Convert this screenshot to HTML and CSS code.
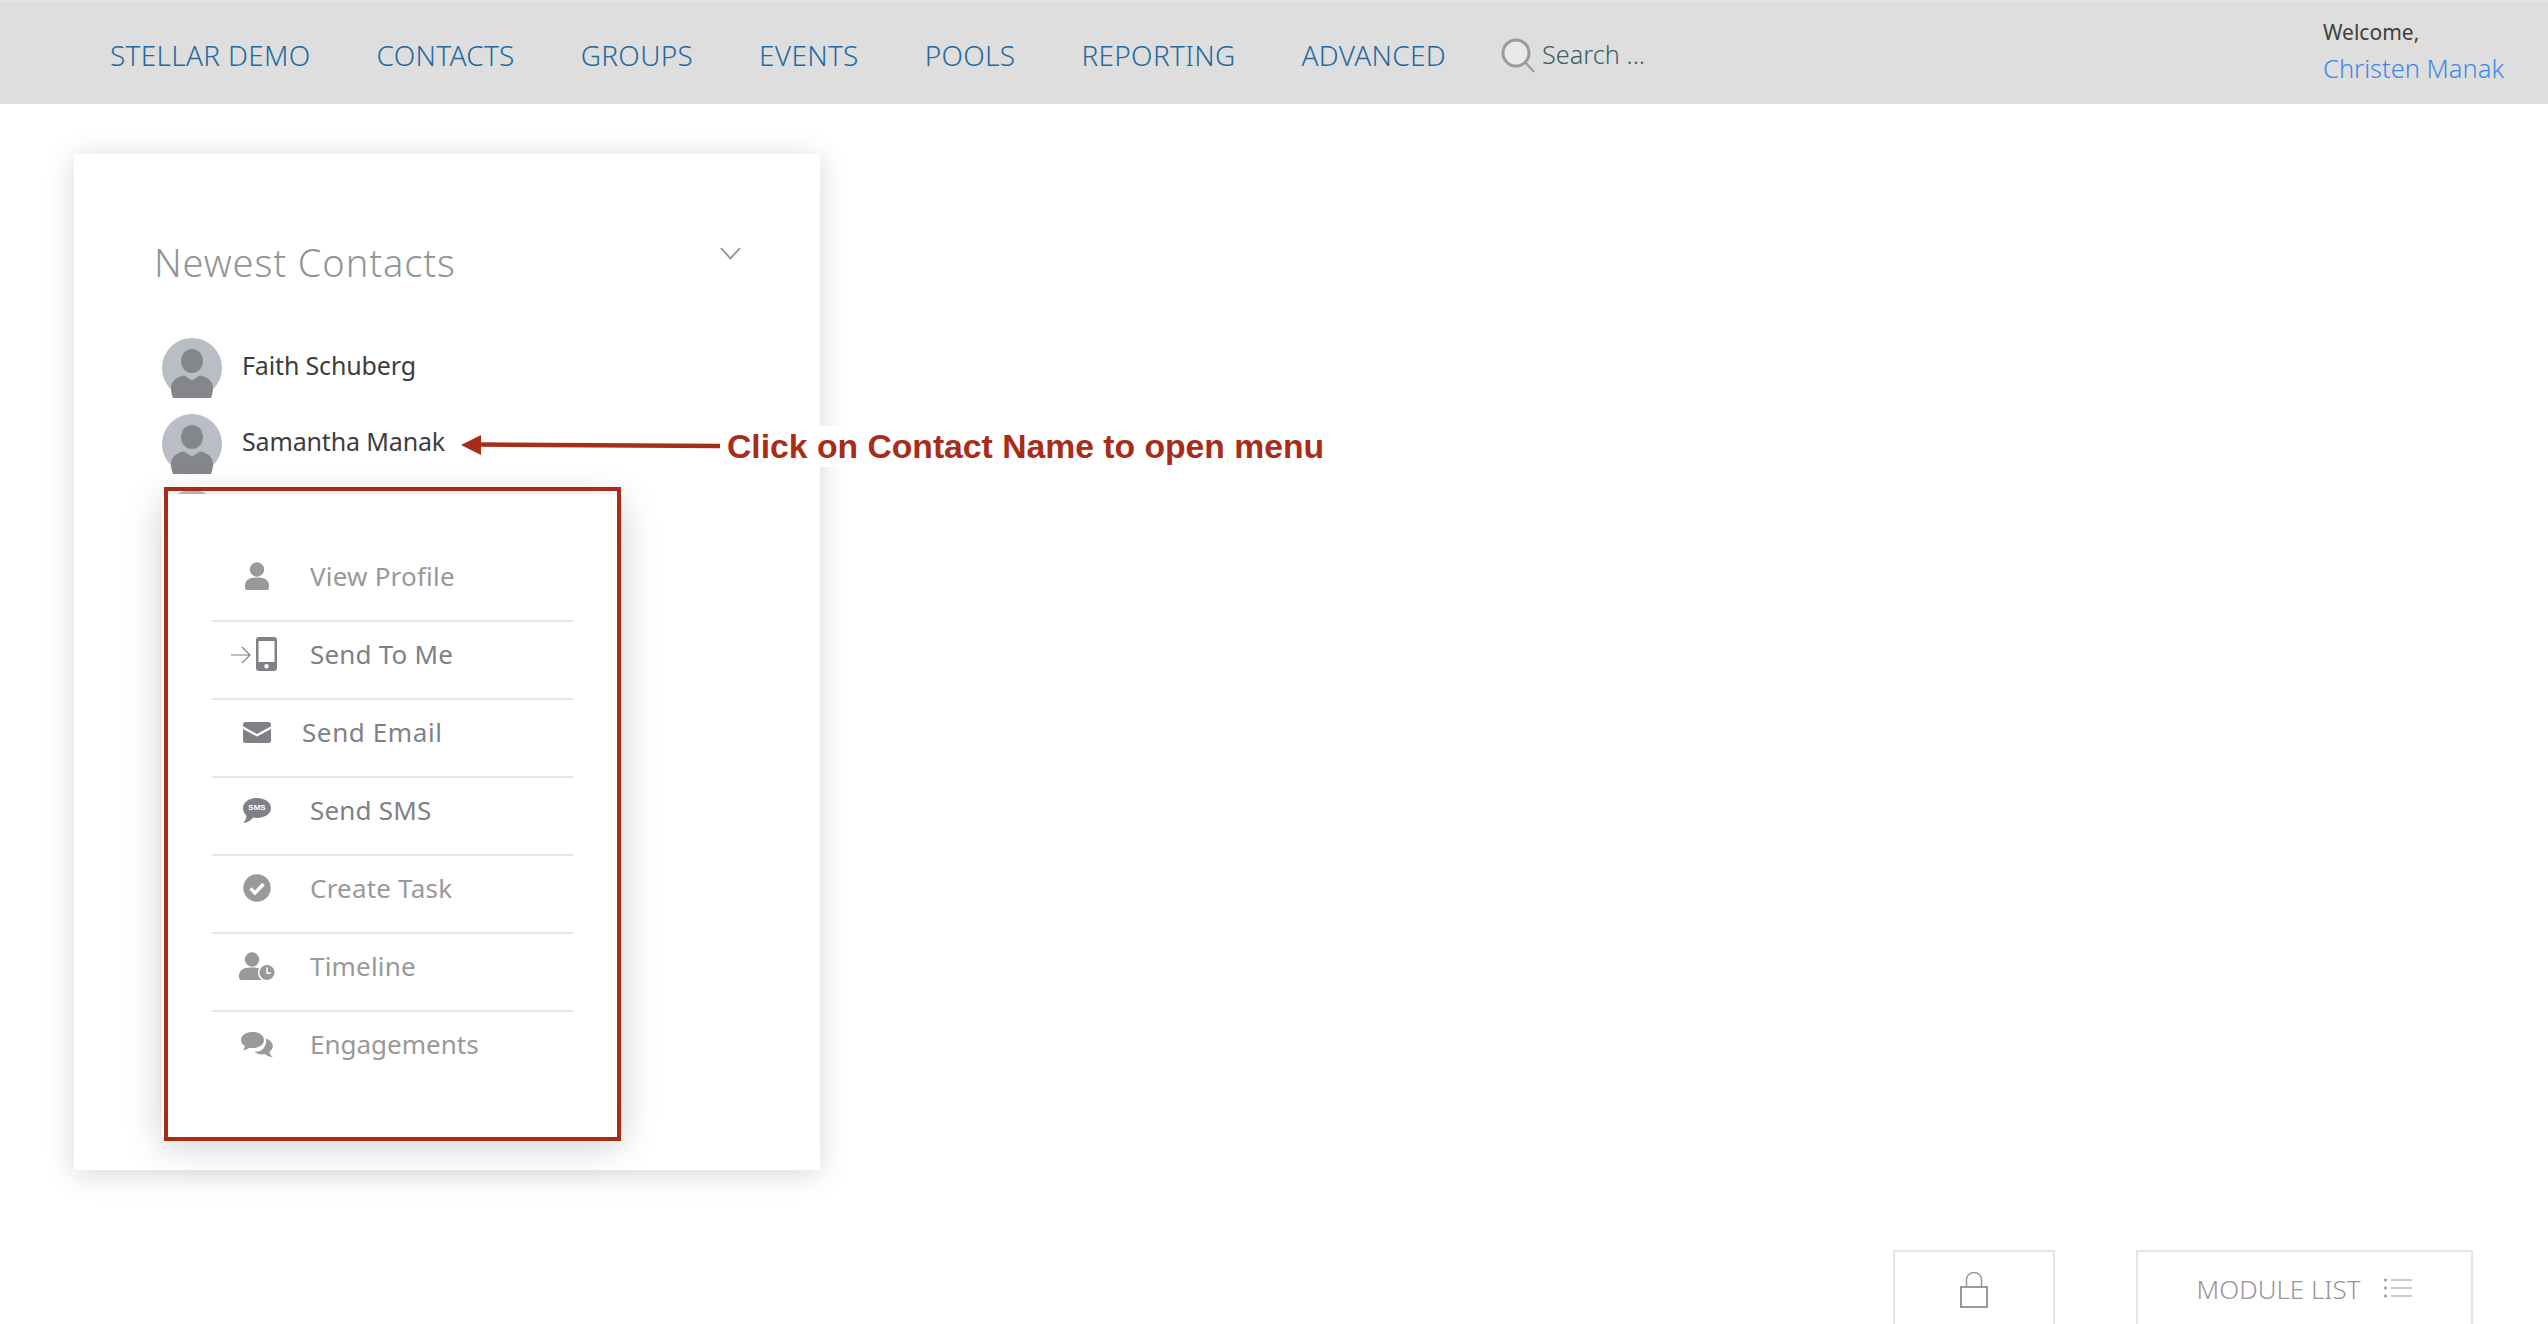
FILE: index.html
```html
<!DOCTYPE html>
<html lang="en">
<head>
<meta charset="utf-8">
<title>Newest Contacts</title>
<link rel="stylesheet" href="styles.css">
</head>
<body>
<div class="page">
  <header class="topbar">
    <nav class="nav">
      <a class="nav-link">STELLAR DEMO</a>
      <a class="nav-link">CONTACTS</a>
      <a class="nav-link">GROUPS</a>
      <a class="nav-link">EVENTS</a>
      <a class="nav-link">POOLS</a>
      <a class="nav-link">REPORTING</a>
      <a class="nav-link">ADVANCED</a>
    </nav>
    <div class="search">
      <svg class="search-icon" width="36" height="36" viewBox="0 0 36 36"><circle cx="16" cy="15" r="13" fill="#e9e9e9" stroke="#9a9a9a" stroke-width="3"/><path d="M25 24l9 10" stroke="#9a9a9a" stroke-width="2" fill="none"/></svg>
      <span class="search-text">Search ...</span>
    </div>
    <div class="user">
      <div class="welcome">Welcome,</div>
      <div class="user-name">Christen Manak</div>
    </div>
  </header>

  <main class="main">
    <section class="card">
      <div class="card-head">
        <h2 class="card-title">Newest Contacts</h2>
        <svg class="chevron" width="21" height="13" viewBox="0 0 21 13"><path d="M1 1l9.500 10.500L20 1" fill="none" stroke="#8f8f8f" stroke-width="1.800"/></svg>
      </div>
      <ul class="contacts">
        <li class="contact">
          <svg class="avatar" width="60" height="60" viewBox="0 0 60 60"><use href="#avatar"/></svg>
          <span class="contact-name">Faith Schuberg</span>
        </li>
        <li class="contact">
          <svg class="avatar" width="60" height="60" viewBox="0 0 60 60"><use href="#avatar"/></svg>
          <span class="contact-name">Samantha Manak</span>
        </li>
        <li class="contact">
          <svg class="avatar" width="60" height="60" viewBox="0 0 60 60"><use href="#avatar"/></svg>
        </li>
      </ul>

      <div class="popup">
        <ul class="menu">
          <li class="menu-row light">
            <span class="menu-icon"><svg width="24" height="28" viewBox="0 0 24 28"><circle cx="12" cy="7.500" r="7.200" fill="#999"/><path d="M0 24c0-6 4-8.500 12-8.500S24 18 24 24v1.500A2.500 2.500 0 0 1 21.500 28h-19A2.500 2.500 0 0 1 0 25.500z" fill="#999"/></svg></span>
            <span class="menu-label">View Profile</span>
          </li>
          <li class="menu-row">
            <span class="menu-icon"><svg class="icon-send" width="46" height="34" viewBox="0 0 46 34"><path d="M0 18h18M11 10l8 8-8 8" fill="none" stroke="#808187" stroke-width="1.200"/><path fill-rule="evenodd" d="M28 0h15a3 3 0 0 1 3 3v28a3 3 0 0 1-3 3H28a3 3 0 0 1-3-3V3a3 3 0 0 1 3-3zm-0.500 4v21h16V4zM35.500 27a2.200 2.200 0 1 0 0 4.400 2.200 2.200 0 0 0 0-4.400z" fill="#808187"/></svg></span>
            <span class="menu-label">Send To Me</span>
          </li>
          <li class="menu-row">
            <span class="menu-icon"><svg width="28" height="21" viewBox="0 0 28 21"><path d="M2.500 0h23A2.500 2.500 0 0 1 28 2.500v1.800L14 12 0 4.300V2.500A2.500 2.500 0 0 1 2.500 0z" fill="#808187"/><path d="M0 7l14 7.500L28 7v11.500a2.500 2.500 0 0 1-2.500 2.500h-23A2.500 2.500 0 0 1 0 18.500z" fill="#808187"/></svg></span>
            <span class="menu-label tight">Send Email</span>
          </li>
          <li class="menu-row">
            <span class="menu-icon"><span class="sms-icon"><svg width="28" height="25" viewBox="0 0 28 25"><path d="M14 0c7.700 0 14 4.300 14 10s-6.300 10-14 10c-1.300 0-2.500-.1-3.700-.4C8 22.500 4 25 0 25c2-1.700 3.200-4 3.500-7.300C1.300 15.800 0 13 0 10 0 4.300 6.300 0 14 0z" fill="#808187"/></svg><span class="sms-text">SMS</span></span></span>
            <span class="menu-label">Send SMS</span>
          </li>
          <li class="menu-row light">
            <span class="menu-icon"><svg width="28" height="28" viewBox="0 0 28 28"><circle cx="14" cy="14" r="13.700" fill="#999"/><path d="M7.500 14.500l4.500 4.500 8.500-9" fill="none" stroke="#fff" stroke-width="3.400"/></svg></span>
            <span class="menu-label">Create Task</span>
          </li>
          <li class="menu-row light">
            <span class="menu-icon"><svg width="36" height="29" viewBox="0 0 36 29"><circle cx="13" cy="7.500" r="7.200" fill="#999"/><path d="M0 24c0-6 4-8.500 13-8.500S26 18 26 24v4H2.500A2.500 2.500 0 0 1 0 25.500z" fill="#999"/><circle cx="28" cy="20.500" r="8.300" fill="#999" stroke="#fff" stroke-width="1.500"/><path d="M28 15.500v5.500h4" fill="none" stroke="#fff" stroke-width="1.500"/></svg></span>
            <span class="menu-label">Timeline</span>
          </li>
          <li class="menu-row light">
            <span class="menu-icon"><svg width="32" height="25" viewBox="0 0 32 25"><path d="M11.500 0C18 0 23 3.400 23 8s-5 8-11.500 8c-1 0-2-.1-3-.3C6.500 17.300 4.500 18 2 18c1-1 1.700-2.300 1.800-4C1.400 12.500 0 10.400 0 8 0 3.400 5 0 11.500 0z" fill="#999"/><path d="M24.500 6.500c4.300 1.200 7.300 4.200 7.300 7.500 0 2.300-1.200 4.200-3.300 5.600.1 2 1 3.900 3.500 5.400-3.300 0-6.200-1-8.200-3-1.400.4-3 .5-4.300.3-2.400-.3-4.500-1-6-2.500 7 .3 12.500-3.800 11.500-13.800z" fill="#999"/></svg></span>
            <span class="menu-label engage">Engagements</span>
          </li>
        </ul>
      </div>
      <div class="highlight-box"></div>
    </section>
  </main>

  <footer class="dock">
    <button class="dock-btn lock-btn">
      <svg width="28" height="36" viewBox="0 0 28 36"><path d="M6.500 15V7.500a7.500 7 0 0 1 15 0V15" fill="none" stroke="#999" stroke-width="1.500"/><rect x="1" y="15" width="26" height="20" fill="none" stroke="#999" stroke-width="2"/></svg>
    </button>
    <button class="dock-btn module-btn">
      <span class="module-text">MODULE LIST</span>
      <svg class="module-icon" width="28" height="20" viewBox="0 0 28 20"><g fill="#999"><circle cx="1.500" cy="2" r="1.500"/><circle cx="1.500" cy="10" r="1.500"/><circle cx="1.500" cy="18" r="1.500"/></g><path d="M7 2h21M7 10h21M7 18h21" stroke="#999" stroke-width="1.200" fill="none"/></svg>
    </button>
  </footer>

  <div class="callout">
    <svg class="callout-arrow" width="262" height="22" viewBox="0 0 262 22"><path d="M18 10.500l241 1.500" stroke="#a82c17" stroke-width="4.500" fill="none"/><path d="M0 11L20 1v20z" fill="#a82c17"/></svg>
    <span class="callout-text">Click on Contact Name to open menu</span>
  </div>
</div>

<svg class="defs" width="0" height="0">
  <defs>
    <g id="avatar">
      <circle cx="30" cy="30" r="30" fill="#babdc5"/>
      <ellipse cx="30" cy="23" rx="11" ry="12" fill="#85868b"/>
      <path d="M11 60c-1.500-4-2-7-2-10 0-7 6-11.500 13-12.500l8 5 8-5c7 1 13 5.500 13 12.500 0 3-.5 6-2 10-5 .5-10 .5-19 .5s-14 0-19-.5z" fill="#85868b"/>
    </g>
  </defs>
</svg>
</body>
</html>
```
FILE: styles.css
```css
* { box-sizing: border-box; }
html, body { margin: 0; padding: 0; background: #fff; }
body { font-family: "Open Sans", "Noto Sans", sans-serif; }
ul { list-style: none; margin: 0; padding: 0; }
.defs { position: absolute; }

.page {
  position: relative;
  width: 2548px;
  height: 1324px;
  overflow: hidden;
  display: flex;
  flex-direction: column;
}

.topbar {
  display: flex;
  align-items: center;
  height: 104px;
  flex: none;
  padding-left: 110px;
  background: #dedede;
  border-top: 2px solid #dfe4ea;
}
.nav { display: flex; gap: 66px; font-family: "Noto Sans", sans-serif; }
.nav-link {
  font-size: 28px;
  font-weight: 300;
  color: #256a9f;
  letter-spacing: 0.3px;
  white-space: nowrap;
  padding-top: 3px;
}
.search { display: flex; align-items: center; gap: 6px; margin-left: 54px; padding-top: 2px; }
.search-icon { display: block; margin-top: 3px; }
.search-text { font-size: 25.300px; color: #3f5f68; font-family: "Noto Sans", sans-serif; font-weight: 300; }
.user { margin-left: auto; width: 225px; margin-top: -5px; font-family: "Noto Sans", sans-serif; }
.welcome { font-size: 21px; line-height: 30px; color: #404040; margin-bottom: 5px; }
.user-name { font-size: 25.500px; line-height: 32px; color: #3f88e8; font-weight: 300; }

.main { flex: none; padding: 50px 0 0 74px; }
.card {
  position: relative;
  width: 746px;
  height: 1016px;
  padding: 83px 48px 0 80px;
  background: #fff;
  box-shadow: 0 4px 28px rgba(0, 0, 0, 0.16);
}
.card-head { display: flex; justify-content: space-between; align-items: flex-start; }
.card-title {
  margin: 0;
  font-family: "Noto Sans", sans-serif;
  font-size: 38px;
  letter-spacing: 0.9px;
  line-height: 50px;
  font-weight: 300;
  color: #949494;
}
.chevron { display: block; margin-top: 10px; margin-right: 31px; }

.contacts { margin: 51px 0 0 8px; }
.contact { display: flex; align-items: center; gap: 20px; height: 76px; padding-bottom: 16px; }
.avatar { display: block; flex: none; }
.contact-name {
  font-family: "Noto Sans", sans-serif;
  font-size: 25px;
  letter-spacing: -0.15px;
  color: #3d3d3d;
  padding-bottom: 6px;
  font-weight: 400;
}

.popup {
  position: absolute;
  left: 88px;
  top: 340px;
  width: 459px;
  height: 643px;
  padding: 50px 48px 0 50px;
  background: #fff;
  box-shadow: 0 8px 36px rgba(0, 0, 0, 0.2);
}
.highlight-box {
  position: absolute;
  left: 90px;
  top: 333px;
  width: 457px;
  height: 654px;
  border: 4px solid #a82c17;
  pointer-events: none;
}
.menu-row {
  display: flex;
  align-items: center;
  height: 78px;
  padding-bottom: 12px;
  border-bottom: 2px solid #e6e6e6;
  color: #808187;
}
.menu-row:last-child { border-bottom-color: transparent; }
.menu-row.light { color: #999; }
.menu-icon {
  width: 90px;
  flex: none;
  display: flex;
  justify-content: center;
  margin-right: 8px;
}
.menu-icon svg { display: block; }
.icon-send { margin-left: -6px; }
.menu-label {
  font-family: "Noto Sans", sans-serif;
  font-size: 26px;
  letter-spacing: 0.2px;
  line-height: 34px;
}
.menu-label.tight { margin-left: -8px; letter-spacing: 0.6px; }
.menu-label.engage { letter-spacing: 0; }
.sms-icon { position: relative; display: block; }
.sms-text {
  position: absolute;
  left: 5px;
  top: 4px;
  width: 18px;
  text-align: center;
  font-family: "Liberation Sans", sans-serif;
  font-size: 8px;
  font-weight: 700;
  line-height: 12px;
  color: #fff;
}

.dock {
  flex: none;
  display: flex;
  gap: 81px;
  margin-top: 80px;
  padding-left: 1893px;
}
.dock-btn {
  display: flex;
  align-items: flex-start;
  justify-content: center;
  height: 90px;
  padding: 0;
  background: #fff;
  border: 2px solid #e4e4e4;
  font: inherit;
}
.lock-btn { width: 162px; padding-top: 20px; }
.module-btn { width: 337px; gap: 24px; padding-top: 22px; }
.module-text {
  font-family: "Noto Sans", sans-serif;
  font-weight: 300;
  font-size: 26px;
  line-height: 30px;
  color: #969696;
}
.module-icon { display: block; margin-top: 4px; }

.callout {
  position: absolute;
  left: 461px;
  top: 426px;
  display: flex;
  align-items: center;
  height: 41px;
  background: linear-gradient(to right, transparent 259px, #fff 259px);
}
.callout-arrow { display: block; margin-top: -3px; margin-right: 4px; }
.callout-text {
  font-family: "Liberation Sans", sans-serif;
  font-weight: 700;
  font-size: 33.700px;
  color: #a82c17;
  white-space: nowrap;
  padding-right: 6px;
}
```
